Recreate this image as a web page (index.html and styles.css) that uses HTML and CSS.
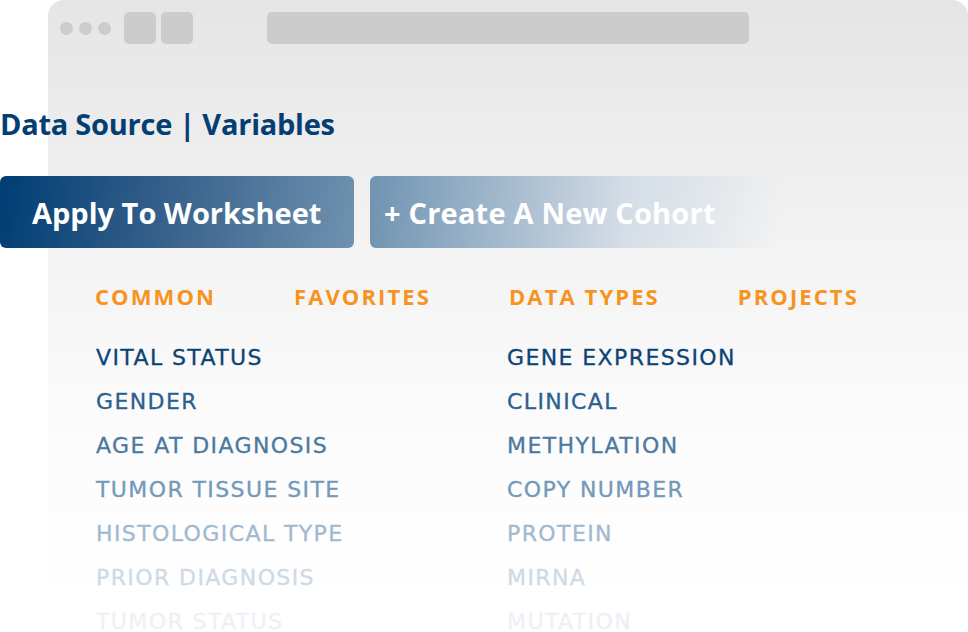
FILE: index.html
```html
<!DOCTYPE html>
<html>
<head>
<meta charset="utf-8">
<link rel="stylesheet" href="styles.css">
</head>
<body>
<div class="window">
  <div class="toolbar">
    <div class="dots"><span class="dot"></span><span class="dot"></span><span class="dot"></span></div>
    <div class="squares"><span class="sq"></span><span class="sq"></span></div>
    <div class="address"></div>
  </div>
  <div class="content">
    <h1 class="title">Data Source | Variables</h1>
    <div class="actions">
      <button class="btn btn-apply">Apply To Worksheet</button>
      <button class="btn btn-create">+ Create A New Cohort</button>
    </div>
    <div class="tabs">
      <span class="tab">COMMON</span>
      <span class="tab">FAVORITES</span>
      <span class="tab">DATA TYPES</span>
      <span class="tab">PROJECTS</span>
    </div>
    <div class="lists">
      <ul class="list">
        <li class="r1">VITAL STATUS</li>
        <li class="r2">GENDER</li>
        <li class="r3">AGE AT DIAGNOSIS</li>
        <li class="r4">TUMOR TISSUE SITE</li>
        <li class="r5">HISTOLOGICAL TYPE</li>
        <li class="r6">PRIOR DIAGNOSIS</li>
        <li class="r7">TUMOR STATUS</li>
      </ul>
      <ul class="list">
        <li class="r1">GENE EXPRESSION</li>
        <li class="r2">CLINICAL</li>
        <li class="r3">METHYLATION</li>
        <li class="r4">COPY NUMBER</li>
        <li class="r5">PROTEIN</li>
        <li class="r6">MIRNA</li>
        <li class="r7">MUTATION</li>
      </ul>
    </div>
  </div>
</div>
</body>
</html>
```
FILE: styles.css
```css
html, body {
  margin: 0;
  padding: 0;
  background: #ffffff;
  height: 632px;
  overflow: hidden;
}
body {
  font-family: "Open Sans", "Liberation Sans", sans-serif;
}
.window {
  margin-left: 48px;
  height: 632px;
  border-radius: 16px 16px 0 0;
  background: linear-gradient(to bottom, #e5e5e5 0px, #f3f3f3 250px, #fbfbfb 420px, #ffffff 600px);
}
.toolbar {
  display: flex;
  align-items: center;
  padding: 12px 0 0 12px;
  height: 32px;
}
.dots {
  display: flex;
  gap: 6px;
}
.dot {
  width: 13px;
  height: 13px;
  border-radius: 50%;
  background: #cccccc;
}
.squares {
  display: flex;
  gap: 5px;
  margin-left: 13px;
}
.sq {
  width: 32px;
  height: 32px;
  border-radius: 5px;
  background: #cccccc;
}
.address {
  margin-left: 74px;
  width: 482px;
  height: 32px;
  border-radius: 5px;
  background: #cccccc;
}
.content {
  margin-left: -48px;
}
.title {
  margin: 62px 0 0 0;
  font-size: 29px;
  line-height: 36px;
  font-weight: 700;
  color: #053e73;
  letter-spacing: -0.25px;
}
.actions {
  display: flex;
  gap: 16px;
  margin-top: 34px;
}
.btn {
  border: none;
  height: 72px;
  border-radius: 6px;
  font-family: inherit;
  font-size: 29px;
  font-weight: 700;
  color: #ffffff;
  text-align: left;
  padding: 0;
}
.btn-apply {
  width: 354px;
  padding-left: 32px;
  background: linear-gradient(100deg, #003d73 0%, #345f8a 45%, #7092b0 100%);
}
.btn-create {
  width: 410px;
  padding-left: 14px;
  letter-spacing: 0.2px;
  background: linear-gradient(95deg, #7093b1 0%, #a7bccf 35%, #d4dde6 62%, rgba(242,242,242,0) 100%);
}
.tabs {
  display: flex;
  gap: 78px;
  margin-top: 36px;
  padding-left: 95px;
}
.tab {
  font-size: 22px;
  font-weight: 700;
  line-height: 24px;
  color: #f7931e;
  letter-spacing: 2.1px;
}
.lists {
  display: grid;
  grid-template-columns: 411px 1fr;
  margin-top: 28px;
  padding-left: 96px;
}
.list {
  list-style: none;
  margin: 0;
  padding: 0;
}
.list li {
  font-family: "DejaVu Sans", "Open Sans", sans-serif;
  font-size: 22px;
  line-height: 44px;
  font-weight: 400;
  letter-spacing: 1.4px;
  -webkit-text-stroke: 0.3px currentColor;
}
.r1 { color: #0c4376; }
.r2 { color: #2b5f8d; }
.r3 { color: #4c79a0; }
.r4 { color: #7399b9; }
.r5 { color: #a0b9cf; }
.r6 { color: #cedae6; }
.r7 { color: #edf1f5; }
```
